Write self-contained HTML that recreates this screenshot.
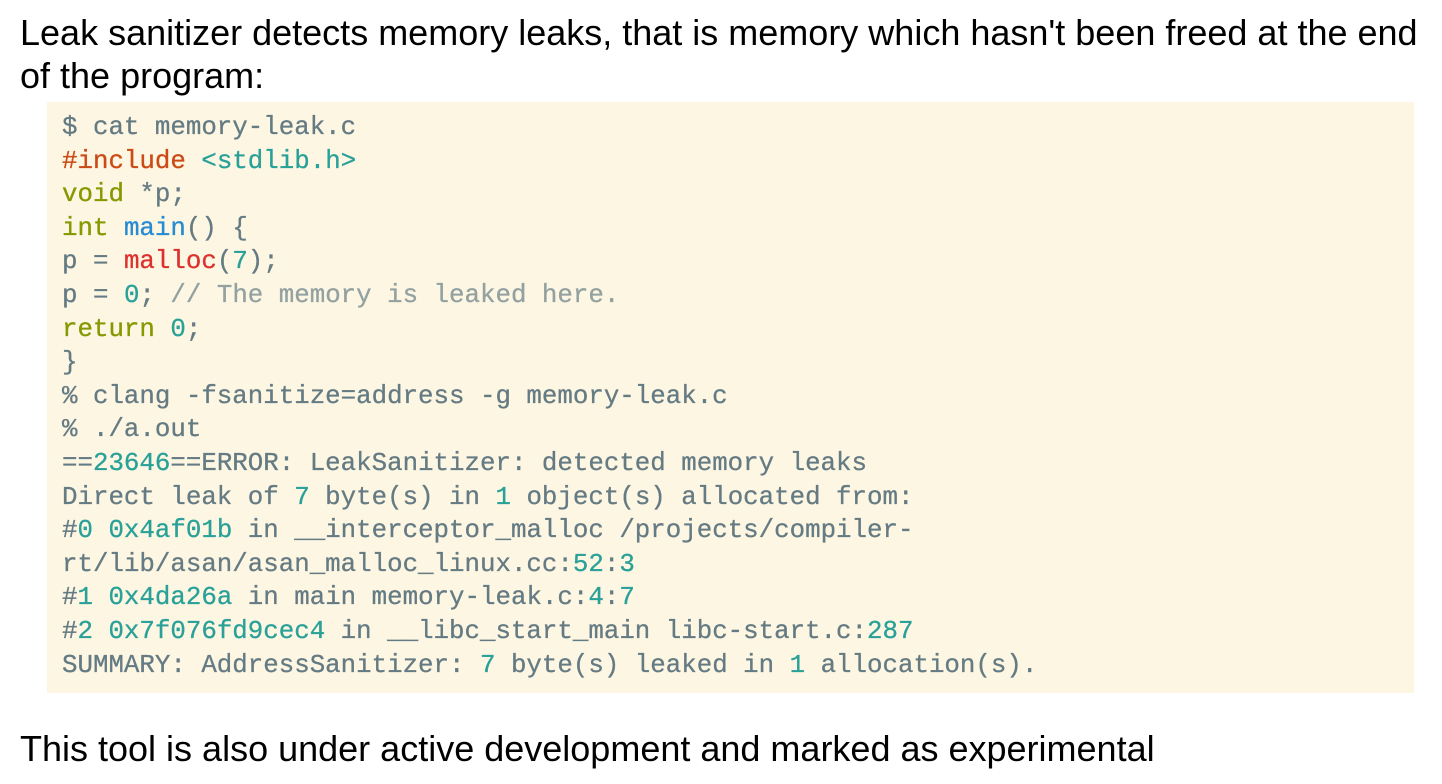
<!DOCTYPE html>
<html><head><meta charset="utf-8"><style>
body{margin:0;width:1442px;height:784px;background:#fff;overflow:hidden;font-family:"Liberation Sans",Arial,sans-serif;color:#000}
p.t{position:absolute;left:20px;margin:0;font-size:36px;line-height:43px;white-space:nowrap}
pre{position:absolute;left:47px;top:102px;width:1367px;height:591px;margin:0;box-sizing:border-box;padding:9px 0 0 15px;background:#fdf6e3;color:#657b83;font-family:"Liberation Mono",monospace;font-size:25.8px;line-height:33.6px;-webkit-text-stroke:0.3px currentColor}
.o{color:#cb4b16}.c{color:#2aa198}.g{color:#859900}.b{color:#268bd2}.r{color:#dc322f}.m{color:#93a1a1}
</style></head><body>
<p class="t" style="top:11px">Leak sanitizer detects memory leaks, that is memory which hasn't been freed at the end<br>of the program:</p>
<pre>$ cat memory-leak.c
<span class="o">#include</span> <span class="c">&lt;stdlib.h&gt;</span>
<span class="g">void</span> *p;
<span class="g">int</span> <span class="b">main</span>() {
p = <span class="r">malloc</span>(<span class="c">7</span>);
p = <span class="c">0</span>; <span class="m">// The memory is leaked here.</span>
<span class="g">return</span> <span class="c">0</span>;
}
% clang -fsanitize=address -g memory-leak.c
% ./a.out
==<span class="c">23646</span>==ERROR: LeakSanitizer: detected memory leaks
Direct leak of <span class="c">7</span> byte(s) in <span class="c">1</span> object(s) allocated from:
#<span class="c">0</span> <span class="c">0x4af01b</span> in __interceptor_malloc /projects/compiler-
rt/lib/asan/asan_malloc_linux.cc:<span class="c">52</span>:<span class="c">3</span>
#<span class="c">1</span> <span class="c">0x4da26a</span> in main memory-leak.c:<span class="c">4</span>:<span class="c">7</span>
#<span class="c">2</span> <span class="c">0x7f076fd9cec4</span> in __libc_start_main libc-start.c:<span class="c">287</span>
SUMMARY: AddressSanitizer: <span class="c">7</span> byte(s) leaked in <span class="c">1</span> allocation(s).</pre>
<p class="t" style="top:727px">This tool is also under active development and marked as experimental</p>
</body></html>
